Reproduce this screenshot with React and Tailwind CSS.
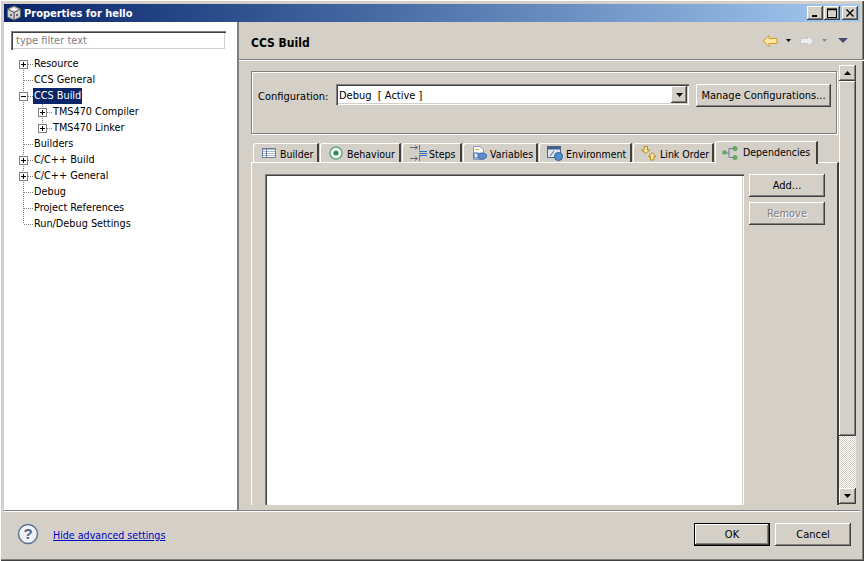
const font = { fontFamily: '"DejaVu Sans", sans-serif', fontStretch: 'condensed' };
const bevel = 'shadow-[inset_-1px_-1px_0_#404040,inset_1px_1px_0_#ffffff,inset_-2px_-2px_0_#808080]';
const sunken = 'shadow-[inset_1px_1px_0_#808080,inset_2px_2px_0_#404040,inset_-1px_-1px_0_#ffffff,inset_-2px_-2px_0_#d4d0c8]';

function Expander({ open }) {
  return (
    <svg width="9" height="9" viewBox="0 0 9 9" className="bg-white relative">
      <rect x="0.5" y="0.5" width="8" height="8" fill="#fff" stroke="#808080" />
      <path d="M2 4.5H7" stroke="#000" />
      {!open && <path d="M4.5 2V7" stroke="#000" />}
    </svg>
  );
}

function TreeRow({ label, level = 0, exp, open, selected, last, vline, first, subLine }) {
  return (
    <div className="relative h-4 flex items-center whitespace-nowrap">
      <svg width="60" height="16" className="absolute left-0 top-0">
        {first && <path d="M19.5 12V16" stroke="#808080" strokeDasharray="1 1" />}
        {vline && <path d={`M19.5 0V${last ? 8 : 16}`} stroke="#808080" strokeDasharray="1 1" />}
        {level === 0 && <path d="M20 8.5H29" stroke="#808080" strokeDasharray="1 1" />}
        {subLine && <path d={`M38.5 0V${subLine === 'end' ? 8 : 16}`} stroke="#808080" strokeDasharray="1 1" />}
        {level === 1 && <path d="M39 8.5H48" stroke="#808080" strokeDasharray="1 1" />}
      </svg>
      {exp && (
        <div className={`absolute top-[4px] flex ${level === 1 ? 'left-[34px]' : 'left-[15px]'}`}>
          <Expander open={open} />
        </div>
      )}
      <span className={`relative h-4 leading-4 text-[10.8px] ${level === 1 ? 'ml-[48px]' : 'ml-[29px]'} px-px ${selected ? 'bg-[#0a246a] text-white' : 'text-[#000]'}`}>{label}</span>
    </div>
  );
}

function CapButton({ children }) {
  return (
    <div className={`w-4 h-[14px] bg-[#d4d0c8] flex items-center justify-center ${bevel}`}>{children}</div>
  );
}

const TabIcons = {
  builder: (
    <svg width="16" height="16" viewBox="0 0 16 16">
      <rect x="1.5" y="3.5" width="13" height="9" fill="#fff" stroke="#6d7f9e" />
      <path d="M2 4.5H14M2 6.5H14M2 8.5H14M2 10.5H14" stroke="#a9b7cf" />
      <path d="M5.5 4V12" stroke="#6d7f9e" />
    </svg>
  ),
  behaviour: (
    <svg width="16" height="16" viewBox="0 0 16 16">
      <circle cx="8" cy="8" r="6" fill="#fff" stroke="#5aa87c" strokeWidth="1.5" />
      <circle cx="8" cy="8" r="2.6" fill="#2f8f57" />
    </svg>
  ),
  steps: (
    <svg width="18" height="16" viewBox="0 0 18 16">
      <path d="M0 2.5H7M5 0.5L7.5 2.5L5 4.5M9.5 0V5M0 13.5H7M5 11.5L7.5 13.5L5 15.5M9.5 11V16" stroke="#5f6f7f" fill="none" />
      <path d="M9 6.5H17M9 8.5H17M9 10.5H17" stroke="#2f6fc0" />
    </svg>
  ),
  variables: (
    <svg width="16" height="16" viewBox="0 0 16 16">
      <path d="M2.5 1.5H9L12.5 4.5V14.5H2.5Z" fill="#fff" stroke="#8c9bb5" />
      <path d="M4.5 4.5H8" stroke="#d9a441" />
      <ellipse cx="11" cy="11" rx="4.5" ry="3" fill="#5f8fcf" stroke="#3a68a8" />
      <rect x="3" y="8" width="4" height="5" fill="#e6eefb" stroke="#3a68a8" />
    </svg>
  ),
  environment: (
    <svg width="16" height="16" viewBox="0 0 16 16">
      <rect x="0.5" y="1.5" width="13" height="11" fill="#dfe6f2" stroke="#50647f" />
      <rect x="1" y="2" width="12" height="2.5" fill="#3f5f8f" />
      <path d="M3 11L7 6" stroke="#50647f" />
      <circle cx="11.5" cy="11.5" r="4" fill="#4f8fd0" stroke="#2f6098" />
    </svg>
  ),
  link: (
    <svg width="16" height="16" viewBox="0 0 16 16">
      <path d="M3 1.5H6.5V5H8.5L5 8.5L0.5 5H3Z" fill="#f7e2a0" stroke="#b88a20" />
      <path d="M11 7.5L15 11.5H13V15H9.5V11.5H7.5Z" fill="#f7e2a0" stroke="#b88a20" />
    </svg>
  ),
  deps: (
    <svg width="16" height="16" viewBox="0 0 16 16">
      <path d="M3 8H7M7 3.5H12M7 12.5H12M7 3.5V12.5" stroke="#6d7f8f" fill="none" />
      <circle cx="2.5" cy="7.5" r="2.3" fill="#62a866" />
      <circle cx="13" cy="3.5" r="2.5" fill="#62a866" />
      <circle cx="13" cy="12.5" r="2.5" fill="#62a866" />
    </svg>
  ),
};

function Tab({ icon, label, width, active, gap = 'gap-[3px]' }) {
  if (active) {
    return (
      <div className={`relative z-10 h-[23px] -mb-[2px] flex items-center whitespace-nowrap bg-[#d4d0c8] border-t border-l border-white rounded-tl-[3px] border-r-2 border-r-[#404040] pl-[6px] ${gap} ${width}`}>
        {icon}
        <span className="text-[#000] text-[10.5px]">{label}</span>
      </div>
    );
  }
  return (
    <div className={`h-[19px] mt-[2px] flex items-center whitespace-nowrap overflow-hidden bg-[#d4d0c8] border-t border-l border-white rounded-tl-[3px] border-r-2 border-r-[#404040] pl-[7px] ${gap} ${width}`}>
      {icon}
      <span className="text-[#000] text-[10.5px] pt-[4px]">{label}</span>
    </div>
  );
}

function Btn({ children, className = '', disabled }) {
  return (
    <div className={`h-[23px] pt-[2px] bg-[#d4d0c8] flex items-center justify-center ${bevel} ${className} ${disabled ? 'text-[#808080] [text-shadow:1px_1px_0_#ffffff]' : 'text-[#000]'}`}>{children}</div>
  );
}

function ScrollArrow({ down }) {
  return (
    <div className={`h-4 w-full shrink-0 bg-[#d4d0c8] flex items-center justify-center ${bevel}`}>
      <svg width="7" height="4" viewBox="0 0 7 4">
        <path d={down ? 'M0 0H7L3.5 4Z' : 'M0 4H7L3.5 0Z'} fill="#000" />
      </svg>
    </div>
  );
}

export default function App() {
  return (
    <div style={font} className="w-[864px] h-[561px] overflow-hidden bg-[#d4d0c8] text-[11px] flex flex-col p-[3px] shadow-[inset_1px_1px_0_#ffffff,inset_-1px_-1px_0_#404040,inset_-2px_-2px_0_#808080]">
      {/* title bar */}
      <div className="h-[18px] mt-px shrink-0 mx-px flex items-center bg-gradient-to-r from-[#0a246a] to-[#a6caf0] px-[2px]">
        <svg width="16" height="16" viewBox="0 0 16 16" className="shrink-0">
          <path d="M8 1L14.5 4V12L8 15L1.5 12V4Z" fill="#cfcfcf" stroke="#666" />
          <path d="M1.5 4L8 7.5L14.5 4M8 7.5V15" stroke="#555" fill="none" />
          <path d="M4 4.5L8 2.8L11.5 4.5L8 6Z" fill="#fff" />
          <circle cx="5" cy="10" r="1" fill="#444" />
          <circle cx="11" cy="10" r="1" fill="#444" />
        </svg>
        <span className="ml-[2px] pt-[2px] font-bold text-white text-[11px] flex-1">Properties for hello</span>
        <div className="flex">
          <CapButton>
            <svg width="8" height="8" viewBox="0 0 8 8"><path d="M1 7H6" stroke="#000" strokeWidth="2" /></svg>
          </CapButton>
          <div className="ml-px">
            <CapButton>
              <svg width="10" height="10" viewBox="0 0 10 10"><rect x="0.5" y="1" width="9" height="8.5" fill="none" stroke="#000" /><path d="M0 1.5H10" stroke="#000" strokeWidth="1.5" /></svg>
            </CapButton>
          </div>
          <div className="ml-[2px]">
            <CapButton>
              <svg width="8" height="8" viewBox="0 0 8 8"><path d="M0.5 0.5L7.5 7.5M7.5 0.5L0.5 7.5" stroke="#000" strokeWidth="1.4" /></svg>
            </CapButton>
          </div>
        </div>
      </div>

      {/* main */}
      <div className="flex-1 min-h-0 flex mx-px">
        {/* left */}
        <div className="w-[233px] shrink-0 bg-white pt-[9px]">
          <div className={`ml-[7px] w-[215px] h-[19px] flex items-center pl-[5px] pt-[2px] bg-white text-[#808080] ${sunken}`}>type filter text</div>
          <div className="mt-[6px]">
            <TreeRow label="Resource" exp first />
            <TreeRow label="CCS General" vline />
            <TreeRow label="CCS Build" exp open selected vline />
            <TreeRow label="TMS470 Compiler" level={1} exp vline subLine="mid" />
            <TreeRow label="TMS470 Linker" level={1} exp vline subLine="end" />
            <TreeRow label="Builders" vline />
            <TreeRow label="C/C++ Build" exp vline />
            <TreeRow label="C/C++ General" exp vline />
            <TreeRow label="Debug" vline />
            <TreeRow label="Project References" vline />
            <TreeRow label="Run/Debug Settings" vline last />
          </div>
        </div>

        {/* right */}
        <div className="flex-1 min-w-0 flex flex-col border-l-2 border-l-[#808080] -mr-[4px]">
          <div className="h-[38px] shrink-0 flex items-center border-b border-b-[#808080] shadow-[0_1px_0_#ffffff] pl-[12px] pr-[16px]">
            <span className="font-bold text-[12px] text-[#000] flex-1 pt-[4px]">CCS Build</span>
            <div className="flex items-center">
              <svg width="15" height="12" viewBox="0 0 15 12">
                <path d="M0.5 6L6 0.5V3.5H14V8.5H6V11.5Z" fill="#fbe8a4" stroke="#d49a1e" />
              </svg>
              <svg width="5" height="3" viewBox="0 0 5 3" className="ml-[8px]"><path d="M0 0H5L2.5 3Z" fill="#000" /></svg>
              <svg width="14" height="12" viewBox="0 0 14 12" className="ml-[9px]">
                <path d="M13.5 6L8 0.5V3.5H0.5V8.5H8V11.5Z" fill="#eeeeee" stroke="#c8c8c8" />
              </svg>
              <svg width="5" height="3" viewBox="0 0 5 3" className="ml-[8px]"><path d="M0 0H5L2.5 3Z" fill="#8a8a8a" /></svg>
              <svg width="10" height="5" viewBox="0 0 10 5" className="ml-[11px]"><path d="M0 0H10L5 5Z" fill="#4a4a78" /></svg>
            </div>
          </div>

          <div className="flex-1 min-h-0 flex pl-[12px] pt-[5px] pb-[5px]">
            {/* page */}
            <div className="w-[588px] shrink-0 pt-[6px] overflow-hidden">
              {/* config group */}
              <div className="h-[63px] w-[586px] border border-[#808080] shadow-[inset_1px_1px_0_#ffffff,1px_1px_0_#ffffff] flex items-start pl-[6px] pt-[12px]">
                <span className="text-[#000] mt-[5px] w-[78px]">Configuration:</span>
                <div className={`w-[353px] h-[21px] bg-white pl-[3px] flex items-center text-[#000] ${sunken}`}>
                  <span className="flex-1 whitespace-pre pt-[4px]">Debug  [ Active ]</span>
                  <div className="mr-[2px]">
                    <div className={`w-[16px] h-[17px] bg-[#d4d0c8] flex items-center justify-center ${bevel}`}>
                      <svg width="7" height="4" viewBox="0 0 7 4"><path d="M0 0H7L3.5 4Z" fill="#000" /></svg>
                    </div>
                  </div>
                </div>
                <Btn className="ml-[7px] w-[135px]">Manage Configurations...</Btn>
              </div>

              {/* tabs */}
              <div className="flex mt-[7px] h-[21px] items-start pl-[2px] gap-[1px]">
                <Tab icon={TabIcons.builder} label="Builder" width="w-[66px]" />
                <Tab icon={TabIcons.behaviour} label="Behaviour" width="w-[81px]" />
                <Tab icon={TabIcons.steps} label="Steps" width="w-[60px]" gap="gap-px" />
                <Tab icon={TabIcons.variables} label="Variables" width="w-[75px]" />
                <Tab icon={TabIcons.environment} label="Environment" width="w-[93px]" />
                <Tab icon={TabIcons.link} label="Link Order" width="w-[81px]" />
                <Tab active icon={TabIcons.deps} label="Dependencies" width="w-[103px]" gap="gap-[5px]" />
              </div>

              {/* tab body */}
              <div className="h-[345px] border-t border-t-white border-l border-l-white border-r-2 border-r-[#404040] flex pl-[13px] pt-[11px]">
                <div className={`w-[479px] h-[340px] bg-white ${sunken}`} />
                <div className="ml-[5px] w-[76px] flex flex-col gap-[5px]">
                  <Btn>Add...</Btn>
                  <Btn disabled>Remove</Btn>
                </div>
              </div>
            </div>

            {/* scrollbar */}
            <div className="w-[17px] h-[439px] flex flex-col">
              <ScrollArrow />
              <div className={`h-[355px] shrink-0 bg-[#d4d0c8] ${bevel}`} />
              <div className="flex-1 bg-[repeating-conic-gradient(#d4d0c8_0_25%,#ffffff_0_50%)] bg-[length:2px_2px]" />
              <ScrollArrow down />
            </div>
          </div>
        </div>
      </div>

      {/* footer */}
      <div className="h-[48px] shrink-0 mx-px border-t border-t-[#808080] shadow-[inset_0_1px_0_#ffffff] flex items-center pl-[13px] pr-[9px]">
        <svg width="22" height="22" viewBox="0 0 22 22" className="shrink-0 -mt-[2px]">
          <circle cx="11" cy="11" r="9.5" fill="#f2f3f6" stroke="#5f7491" strokeWidth="1.5" />
          <text x="11" y="16" textAnchor="middle" fontSize="15" fontWeight="700" fill="#4f6483" fontFamily="Liberation Sans, sans-serif">?</text>
        </svg>
        <span className="ml-[14px] underline text-[#0000c8] flex-1 text-[10.6px] mt-[3px]">Hide advanced settings</span>
        <div className="flex gap-[5px] -mt-px">
          <div className="w-[76px] h-[23px] pt-[2px] border border-black bg-[#d4d0c8] flex items-center justify-center text-[#000] shadow-[inset_-1px_-1px_0_#404040,inset_1px_1px_0_#ffffff,inset_-2px_-2px_0_#808080]">OK</div>
          <Btn className="w-[76px]">Cancel</Btn>
        </div>
      </div>
    </div>
  );
}
